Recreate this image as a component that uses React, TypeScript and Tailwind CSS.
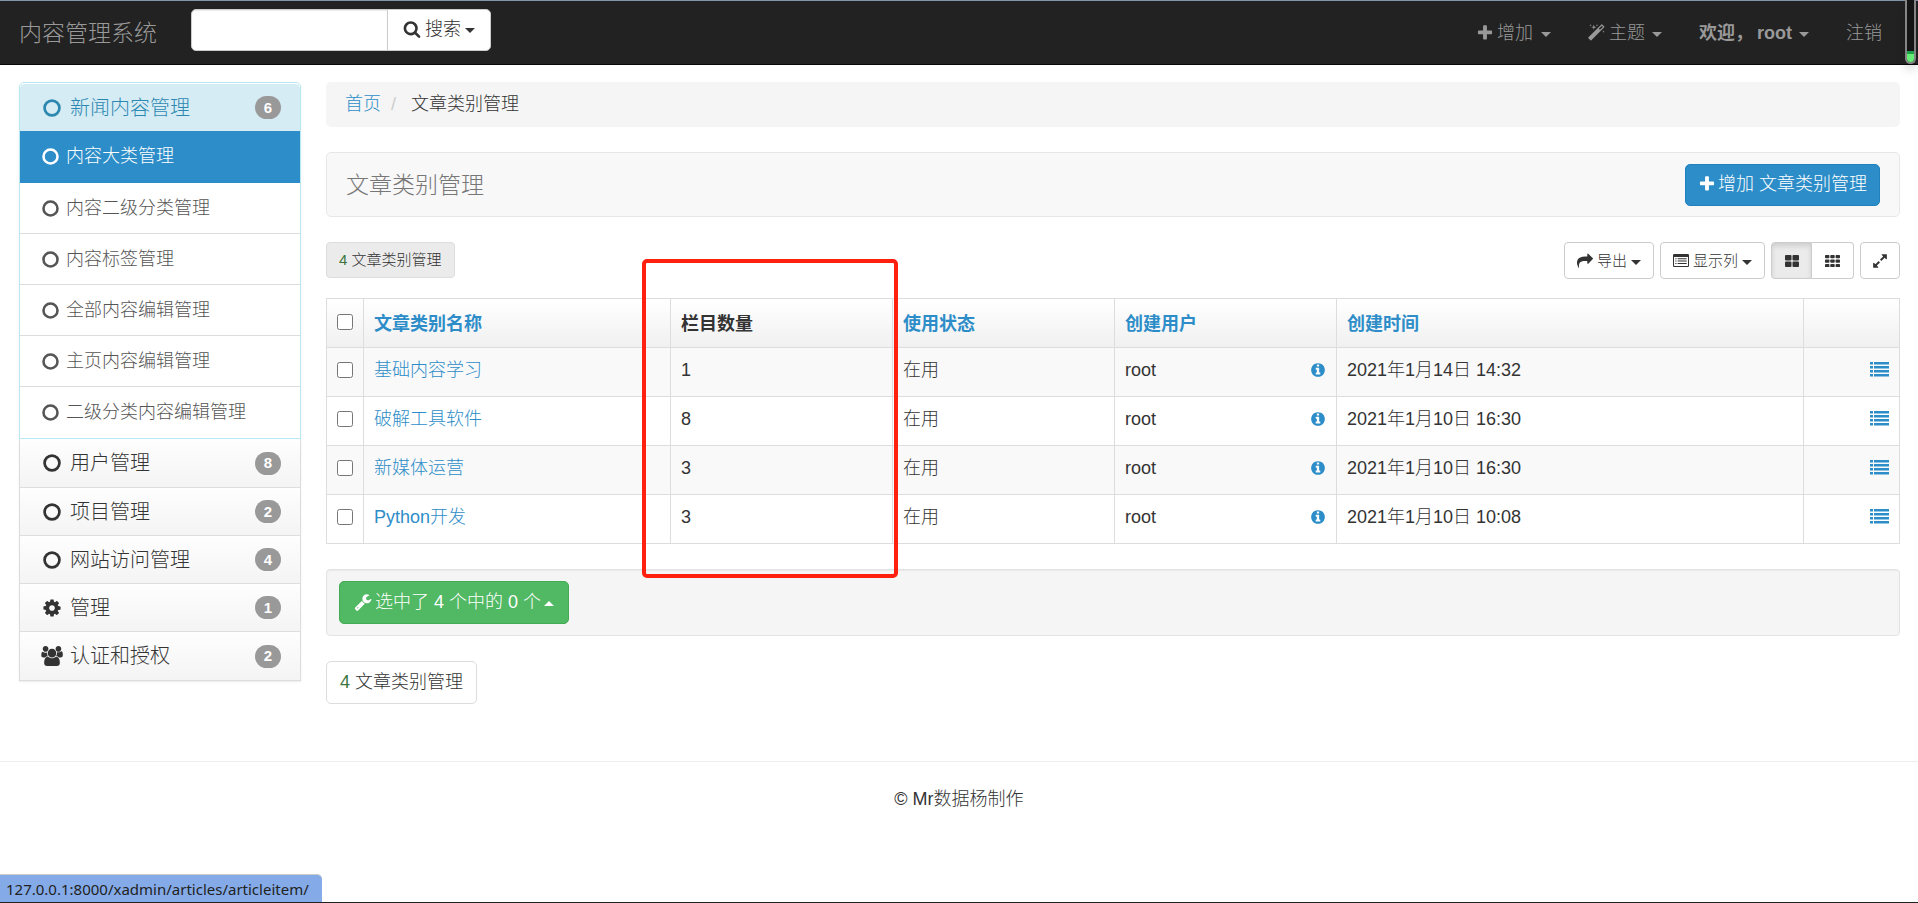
import type { ReactNode } from "react"

const icons = {
  plus: "M1600 736v192q0 40-28 68t-68 28h-416v416q0 40-28 68t-68 28h-192q-40 0-68-28t-28-68v-416h-416q-40 0-68-28t-28-68v-192q0-40 28-68t68-28h416v-416q0-40 28-68t68-28h192q40 0 68 28t28 68v416h416q40 0 68 28t28 68z",
  search: "M1216 832q0-185-131.5-316.5t-316.5-131.5-316.5 131.5-131.5 316.5 131.5 316.5 316.5 131.5 316.5-131.5 131.5-316.5zm512 832q0 52-38 90t-90 38q-54 0-90-38l-343-342q-179 124-399 124-143 0-273.5-55.5t-225-150-150-225-55.5-273.5 55.5-273.5 150-225 225-150 273.5-55.5 273.5 55.5 225 150 150 225 55.5 273.5q0 220-124 399l343 343q37 37 37 90z",
  magic: "M1190 581l293-293-107-107-293 293zm447-293q0 27-18 45l-1286 1286q-18 18-45 18t-45-18l-198-198q-18-18-18-45t18-45l1286-1286q18-18 45-18t45 18l198 198q18 18 18 45zm-1351-190l98 30-98 30-30 98-30-98-98-30 98-30 30-98zm350 162l196 60-196 60-60 196-60-196-196-60 196-60 60-196zm930 478l98 30-98 30-30 98-30-98-98-30 98-30 30-98zm-640-640l98 30-98 30-30 98-30-98-98-30 98-30 30-98z",
  cog: "M1152 896q0-106-75-181t-181-75-181 75-75 181 75 181 181 75 181-75 75-181zm512-109v222q0 12-8 23t-20 13l-185 28q-19 54-39 91 35 50 107 138 10 12 10 25t-9 23q-27 37-99 108t-94 71q-12 0-26-9l-138-108q-44 23-91 38-16 136-29 186-7 28-36 28h-222q-14 0-24.5-8.5t-11.5-21.5l-28-184q-49-16-90-37l-141 107q-10 9-25 9-14 0-25-11-126-114-165-168-7-10-7-23 0-12 8-23 15-21 51-66.5t54-70.5q-27-50-41-99l-183-27q-13-2-21-12.5t-8-23.5v-222q0-12 8-23t19-13l186-28q14-46 39-92-40-57-107-138-10-12-10-24 0-10 9-23 26-36 98.5-107.5t94.5-71.5q13 0 26 10l138 107q44-23 91-38 16-136 29-186 7-28 36-28h222q14 0 24.5 8.5t11.5 21.5l28 184q49 16 90 37l142-107q9-9 24-9 13 0 25 10 129 119 165 170 7 8 7 22 0 12-8 23-15 21-51 66.5t-54 70.5q26 50 41 98l183 28q13 2 21 12.5t8 23.5z",
  info: "M1152 1376v-160q0-14-9-23t-23-9h-96v-512q0-14-9-23t-23-9h-320q-14 0-23 9t-9 23v160q0 14 9 23t23 9h96v320h-96q-14 0-23 9t-9 23v160q0 14 9 23t23 9h448q14 0 23-9t9-23zm-128-896v-160q0-14-9-23t-23-9h-192q-14 0-23 9t-9 23v160q0 14 9 23t23 9h192q14 0 23-9t9-23zm640 416q0 209-103 385.5t-279.5 279.5-385.5 103-385.5-103-279.5-279.5-103-385.5 103-385.5 279.5-279.5 385.5-103 385.5 103 279.5 279.5 103 385.5z",
  wrench: "M448 1472q0-26-19-45t-45-19-45 19-19 45 19 45 45 19 45-19 19-45zm644-420l-682 682q-37 37-90 37-52 0-91-37l-106-108q-38-36-38-90 0-53 38-91l681-681q39 98 114.5 173.5t173.5 114.5zm634-435q0 39-23 106-47 134-164.5 217.5t-258.5 83.5q-185 0-316.5-131.5t-131.5-316.5 131.5-316.5 316.5-131.5q58 0 121.5 16.5t107.5 46.5q16 11 16 28t-16 28l-293 169v224l193 107q5-3 79-48.5t135.5-81 70.5-35.5q15 0 23.5 10t8.5 25z",
  share: "M1792 640q0 26-19 45l-512 512q-19 19-45 19t-45-19-19-45v-256h-224q-98 0-175.5 6t-154 21.5-133 42.5-105.5 69.5-80 101-48.5 138.5-17.5 181q0 55 5 123 0 6 2.5 23.5t2.5 26.5q0 15-8.5 25t-23.5 10q-16 0-28-17-7-9-13-22t-13.5-30-10.5-24q-127-285-127-451 0-199 53-333 162-403 875-403h224v-256q0-26 19-45t45-19 45 19l512 512q19 19 19 45z",
  expand: "M883 1056q0 13-10 23l-332 332 144 144q19 19 19 45t-19 45-45 19h-448q-26 0-45-19t-19-45v-448q0-26 19-45t45-19 45 19l144 144 332-332q10-10 23-10t23 10l114 114q10 10 10 23zm781-864v448q0 26-19 45t-45 19-45-19l-144-144-332 332q-10 10-23 10t-23-10l-114-114q-10-10-10-23t10-23l332-332-144-144q-19-19-19-45t19-45 45-19h448q26 0 45 19t19 45z",
  users: "M593 896q-162 5-265 128h-134q-82 0-138-40.5t-56-118.5q0-353 124-353 6 0 43.5 21t97.5 42.5 119 21.5q67 0 133-23-5 37-5 66 0 159 93 293zm1071 637q0 120-73 189.5t-194 69.5h-874q-121 0-194-69.5t-73-189.5q0-53 3.5-103.5t14-109 26.5-108.5 43-97.5 62-81 85.5-53.5 111.5-20q10 0 43 21.5t73 48 107 48 135 21.5 135-21.5 107-48 73-48 43-21.5q61 0 111.5 20t85.5 53.5 62 81 43 97.5 26.5 108.5 14 109 3.5 103.5zm-1024-1277q0 106-75 181t-181 75-181-75-75-181 75-181 181-75 181 75 75 181zm704 384q0 159-112.5 271.5t-271.5 112.5-271.5-112.5-112.5-271.5 112.5-271.5 271.5-112.5 271.5 112.5 112.5 271.5zm576 225q0 78-56 118.5t-138 40.5h-134q-103-123-265-128 93-134 93-293 0-29-5-66 66 23 133 23 59 0 119-21.5t97.5-42.5 43.5-21q124 0 124 353zm-128-609q0 106-75 181t-181 75-181-75-75-181 75-181 181-75 181 75 75 181z",
}

type IconName = keyof typeof icons

const Icon = ({ name, className = "size-[18px]" }: { name: IconName, className?: string }) => (

  <svg viewBox={name === "users" ? "0 0 1920 1792" : "0 0 1792 1792"} fill="currentColor" className={`shrink-0 ${className}`} aria-hidden="true">
    <path d={icons[name]} />
  </svg>

)

const Ring = ({ className }: { className: string }) => (

  <svg viewBox="0 0 16 16" fill="none" stroke="currentColor" strokeWidth="2.4" className={`shrink-0 ${className}`} aria-hidden="true">
    <circle cx="8" cy="8" r="6.6" />
  </svg>

)

const Caret = ({ up = false }: { up?: boolean }) => (

  <svg viewBox="0 0 10 5" fill="currentColor" className="mt-1 w-[10px] h-[5px] shrink-0" aria-hidden="true">
    <path d={up ? "M0 5h10L5 0z" : "M0 0h10L5 5z"} />
  </svg>

)

const ListAlt = () => (

  <svg viewBox="0 0 16 13" fill="currentColor" className="w-4 h-[13px] shrink-0" aria-hidden="true">
    <path fillRule="evenodd" d="M1.2 0h13.6Q16 0 16 1.2v10.6q0 1.2-1.2 1.2H1.2Q0 13 0 11.8V1.2Q0 0 1.2 0zM1 3v8.6q0 .4.4.4h13.2q.4 0 .4-.4V3z" />
    <path d="M2.3 4.2h1.2v1H2.3zM4.6 4.2h9.1v1H4.6zM2.3 6.6h1.2v1H2.3zM4.6 6.6h9.1v1H4.6zM2.3 9h1.2v1H2.3zM4.6 9h9.1v1H4.6z" />
  </svg>

)

const ThLarge = () => (

  <svg viewBox="0 0 14 12" fill="currentColor" className="w-[14px] h-3" aria-hidden="true">
    <rect width="6.5" height="5.5" rx="1" />
    <rect x="7.5" width="6.5" height="5.5" rx="1" />
    <rect y="6.5" width="6.5" height="5.5" rx="1" />
    <rect x="7.5" y="6.5" width="6.5" height="5.5" rx="1" />
  </svg>

)

const Th = () => (

  <svg viewBox="0 0 15 12" fill="currentColor" className="w-[15px] h-3" aria-hidden="true">
    {
      [0, 4.5, 9].map((y) => [0, 5.3, 10.6].map((x) => (
        <rect key={`${x}-${y}`} x={x} y={y} width="4.4" height="3.2" rx="0.8" />
      )))
    }
  </svg>

)

const ListIcon = () => (

  <svg viewBox="0 0 19 15" fill="currentColor" className="w-[19px] h-[15px]" aria-hidden="true">
    {
      [0, 4, 8, 12].map((y) => (
        <g key={y}>
          <rect y={y} width="3" height="2.5" />
          <rect x="4" y={y} width="15" height="2.5" />
        </g>
      ))
    }
  </svg>

)

const subItems = ["内容大类管理", "内容二级分类管理", "内容标签管理", "全部内容编辑管理", "主页内容编辑管理", "二级分类内容编辑管理"]

const groups: { title: string, count: number, icon?: IconName }[] = [
  { title: "用户管理", count: 8 },
  { title: "项目管理", count: 2 },
  { title: "网站访问管理", count: 4 },
  { title: "管理", count: 1, icon: "cog" },
  { title: "认证和授权", count: 2, icon: "users" },
]

const columns = [
  { header: "文章类别名称", sortable: true, className: "w-[307px]" },
  { header: "栏目数量", sortable: false, className: "w-[222px]" },
  { header: "使用状态", sortable: true, className: "w-[222px]" },
  { header: "创建用户", sortable: true, className: "w-[222px]" },
  { header: "创建时间", sortable: true, className: "" },
]

const rows = [
  { name: "基础内容学习", count: 1, status: "在用", user: "root", date: "2021年1月14日 14:32" },
  { name: "破解工具软件", count: 8, status: "在用", user: "root", date: "2021年1月10日 16:30" },
  { name: "新媒体运营", count: 3, status: "在用", user: "root", date: "2021年1月10日 16:30" },
  { name: "Python开发", count: 3, status: "在用", user: "root", date: "2021年1月10日 10:08" },
]

const Badge = ({ children }: { children: ReactNode }) => (

  <span className="ml-auto flex h-[23px] w-[26px] items-center justify-center rounded-full bg-[#999] text-[15px] font-bold text-white">{children}</span>

)

const Navbar = () => (

  <nav className="flex h-[65px] items-center border-t border-b border-t-[#8294a8] border-b-[#080808] bg-[#222] pl-[19px] pr-[36px] text-[#999]">

    <a href="#" className="text-[23px]">内容管理系统</a>

    <form className="mb-[6px] ml-[34px] flex h-[42px]">
      <input type="text" aria-label="搜索" className="w-[197px] rounded-l-[5px] border border-[#ccc] bg-white px-4 text-[#555] shadow-[inset_0_1px_1px_rgba(0,0,0,0.08)]" />
      <button type="button" className="-ml-px flex items-center gap-1 rounded-r-[5px] border border-[#ccc] bg-white px-[15px] pb-[2px] text-[#333]">
        <Icon name="search" />
        搜索
        <Caret />
      </button>
    </form>

    <div className="ml-auto flex items-center gap-[37px]">
      <button type="button" className="flex items-center gap-[3px]">
        <Icon name="plus" />
        <span className="mr-[5px]">增加</span>
        <Caret />
      </button>
      <button type="button" className="flex items-center gap-[3px]">
        <Icon name="magic" />
        <span className="mr-[4px]">主题</span>
        <Caret />
      </button>
      <button type="button" className="flex items-center font-bold">
        <span className="mr-1">欢迎，</span>
        <span className="mr-[7px]">root</span>
        <Caret />
      </button>
      <a href="#">注销</a>
    </div>

  </nav>

)

const Sidebar = () => (

  <aside className="w-[282px] shrink-0 self-start rounded-t-[5px] shadow-[0_1px_2px_rgba(0,0,0,0.08)]">

    <div className="rounded-t-[5px] border border-[#b5e8f0]">

      <a href="#" className="flex h-12 items-center rounded-t-[5px] border-t border-white bg-[#d6ecf4] pl-[23px] pr-[19px] text-[20px] text-[#2d88b1]">
        <Ring className="mr-[9px] size-[18px]" />
        新闻内容管理
        <Badge>6</Badge>
      </a>

      <ul className="pb-px">
        {
          subItems.map((item, index) => (
            <li key={item} className={index === 0 ? "bg-[#2d8dc8] text-white" : index === 1 ? "text-[#555]" : "border-t border-[#ddd] text-[#555]"}>
              <a href="#" className={index === 0 ? "flex h-[52px] items-center pb-[2px] pl-[22px]" : "flex h-[50px] items-center pl-[22px]"}>
                <Ring className="mr-[7px] size-[17px]" />
                {item}
              </a>
            </li>
          ))
        }
      </ul>

    </div>

    <div>
      {
        groups.map((group) => (
          <a key={group.title} href="#" className="flex h-12 items-center border border-t-0 border-[#ddd] bg-linear-to-b from-[#fefefe] to-[#f4f4f4] pl-[22px] pr-[19px] text-[20px] text-[#333] first:h-[49px] last:h-[49px]">
            <span className="mr-2 flex w-5 justify-center">
              {
                group.icon
                  ? <Icon name={group.icon} className={group.icon === "users" ? "h-5 w-[22px]" : "size-5"} />
                  : <Ring className="size-[18px]" />
              }
            </span>
            {group.title}
            <Badge>{group.count}</Badge>
          </a>
        ))
      }
    </div>

  </aside>

)

const smallButton = "flex h-[37px] items-center justify-center gap-1 border border-[#ccc] text-[#333]"

const Toolbar = () => (

  <div className="mb-[19px] flex h-[37px] items-start text-[15px]">

    <button type="button" className="h-9 rounded border border-[#ddd] bg-[#ebebeb] px-3 text-[#333]">
      <span className="text-[#3c763d]">4</span> 文章类别管理
    </button>

    <div className="ml-auto flex gap-[6px]">
      <button type="button" className={`${smallButton} rounded bg-white px-3`}>
        <Icon name="share" className="size-4" />
        导出
        <Caret />
      </button>
      <button type="button" className={`${smallButton} rounded bg-white px-3`}>
        <ListAlt />
        显示列
        <Caret />
      </button>
      <div className="flex">
        <button type="button" aria-label="大图" className={`${smallButton} w-[41px] rounded-l border-[#adadad] bg-[#ebebeb] shadow-[inset_0_3px_5px_rgba(0,0,0,0.125)]`}>
          <ThLarge />
        </button>
        <button type="button" aria-label="网格" className={`${smallButton} w-[42px] rounded-r border-l-0 bg-white`}>
          <Th />
        </button>
      </div>
      <button type="button" aria-label="全屏" className={`${smallButton} w-10 rounded bg-white`}>
        <Icon name="expand" className="size-4" />
      </button>
    </div>

  </div>

)

const ResultTable = () => (

  <div className="relative mb-[25px]">

    <table className="w-full table-fixed border-collapse text-left leading-6">

      <thead>
        <tr className="bg-linear-to-b from-white to-[#f0f0f0]">
          <th className="w-[37px] border border-[#ddd] align-top">
            <input type="checkbox" aria-label="全选" className="mx-auto mt-[15px] block size-4" />
          </th>
          {
            columns.map((col) => (
              <th key={col.header} className={`border border-[#ddd] px-[10px] pt-[13px] pb-[11px] font-bold text-[#333] ${col.className}`}>
                { col.sortable ? <a href="#" className="text-[#2d8dc8]">{col.header}</a> : col.header }
              </th>
            ))
          }
          <th className="w-[96px] border border-[#ddd]"></th>
        </tr>
      </thead>

      <tbody>
        {
          rows.map((row) => (
            <tr key={row.name} className="odd:bg-[#f9f9f9] [&>td]:border [&>td]:border-[#ddd] [&>td]:px-[10px] [&>td]:pt-[10px] [&>td]:pb-[14px]">
              <td className="align-top">
                <input type="checkbox" aria-label={row.name} className="mt-1 block size-4" />
              </td>
              <td><a href="#" className="text-[#2d8dc8]">{row.name}</a></td>
              <td>{row.count}</td>
              <td>{row.status}</td>
              <td>
                <div className="flex items-center justify-between">
                  {row.user}
                  <a href="#" aria-label="详情" className="text-[#2d8dc8]"><Icon name="info" className="size-4" /></a>
                </div>
              </td>
              <td>{row.date}</td>
              <td>
                <a href="#" aria-label="列表" className="flex h-6 items-center justify-end pb-[2px] text-[#2d8dc8]"><ListIcon /></a>
              </td>
            </tr>
          ))
        }
      </tbody>

    </table>

    {/* highlight over the count column */}
    <div className="pointer-events-none absolute -top-[39px] left-[316px] h-[319px] w-[256px] rounded-[5px] border-4 border-[#ff2010]"></div>

  </div>

)

const App = () => {

  return (

    <div className="relative flex min-h-screen flex-col bg-white font-['Liberation_Sans','Noto_Sans_CJK_SC',sans-serif] text-[18px] leading-6 font-light text-[#333]">

      <Navbar />

      {/* SCROLL INDICATOR */}
      <div className="absolute top-0 right-[2px] flex h-16 w-[11px] flex-col justify-end rounded-b-full border-2 border-t-0 border-[#858585] bg-[#151515] shadow-[0_6px_10px_rgba(0,0,0,0.15)]">
        <div className="h-[11px] rounded-b-full border-t-[3px] border-[#1fa04c] bg-[#66ee77]"></div>
      </div>

      <div className="flex gap-[25px] pt-[17px] pr-[18px] pl-[19px]">

        <Sidebar />

        <main className="min-w-0 flex-1">

          <ol className="mb-[25px] flex h-[45px] items-center rounded-[5px] bg-[#f5f5f5] px-[19px] pb-[2px]">
            <li><a href="#" className="text-[#2d8dc8]">首页</a></li>
            <li className="w-[30px] pl-[10px] text-[#ccc]">/</li>
            <li>文章类别管理</li>
          </ol>

          <div className="mb-[25px] flex h-[65px] items-center justify-between rounded-[5px] border border-[#e7e7e7] bg-[#f8f8f8] px-[19px]">
            <h1 className="text-[23px] text-[#777]">文章类别管理</h1>
            <a href="#" className="flex h-[42px] items-center gap-[2px] rounded-[5px] border border-[#1f82be] bg-[#2d8dc8] px-3 pb-[2px] text-white">
              <Icon name="plus" />
              增加 文章类别管理
            </a>
          </div>

          <Toolbar />

          <ResultTable />

          <div className="mb-[25px] flex h-[67px] items-center rounded border border-[#e3e3e3] bg-[#f5f5f5] px-3 shadow-[inset_0_1px_1px_rgba(0,0,0,0.05)]">
            <button type="button" className="flex h-[43px] items-center gap-[3px] rounded-[5px] border border-[#43ac52] bg-[#51b863] px-[14px] pb-[2px] text-white">
              <Icon name="wrench" />
              选中了 4 个中的 0 个
              <Caret up />
            </button>
          </div>

          <button type="button" className="block h-[43px] rounded-[5px] border border-[#ddd] px-[13px] pb-[2px]">
            <span className="text-[#3c763d]">4</span> 文章类别管理
          </button>

        </main>

      </div>

      <footer className="mt-[57px] border-t border-[#eee] pt-[25px] text-center">
        <p>© Mr数据杨制作</p>
      </footer>

      {/* STATUS BAR */}
      <div className="fixed inset-x-0 bottom-0 border-b border-[#222]">
        <div className="flex h-7 w-[322px] items-center rounded-tr-[5px] border-t border-[#ccc] bg-[#84abe8] pl-[6px] font-['Noto_Sans',sans-serif] text-[15px] font-normal text-[#222]">
          127.0.0.1:8000/xadmin/articles/articleitem/
        </div>
      </div>

    </div>

  )

}

export default App
